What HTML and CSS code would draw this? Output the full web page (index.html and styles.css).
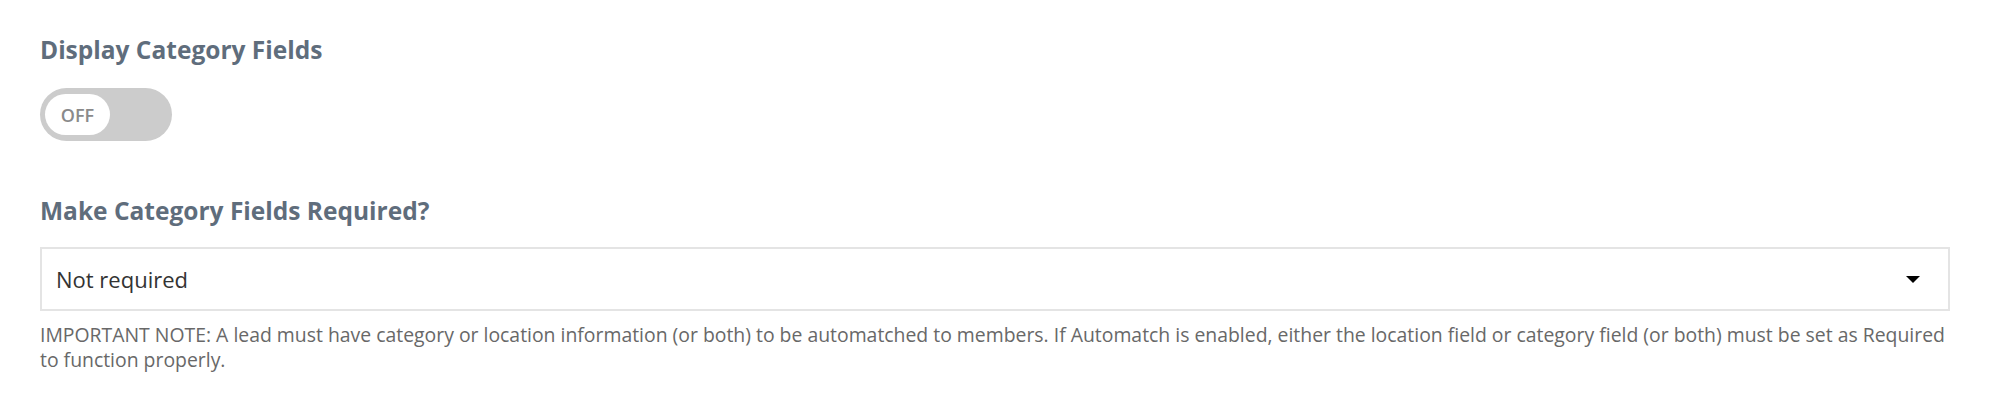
FILE: index.html
```html
<!DOCTYPE html>
<html>
<head>
<meta charset="utf-8">
<link rel="stylesheet" href="styles.css">
</head>
<body>
<div class="page">
  <section class="field">
    <h3 class="field-label">Display Category Fields</h3>
    <div class="toggle">
      <span class="toggle-knob">OFF</span>
    </div>
  </section>
  <section class="field field-second">
    <h3 class="field-label">Make Category Fields Required?</h3>
    <div class="select">
      <span class="select-value">Not required</span>
      <span class="select-arrow"></span>
    </div>
    <p class="note">IMPORTANT NOTE: A lead must have category or location information (or both) to be automatched to members. If Automatch is enabled, either the location field or category field (or both) must be set as Required to function properly.</p>
  </section>
</div>
</body>
</html>
```
FILE: styles.css
```css
html, body {
  margin: 0;
  padding: 0;
  background: #ffffff;
}
.page {
  padding: 35px 48px 0 40px;
  font-family: "Open Sans", "Noto Sans", sans-serif;
}
.field-label {
  margin: 0;
  font-size: 24.5px;
  line-height: 30px;
  font-weight: 700;
  color: #5f6d7c;
}
.toggle {
  margin-top: 23px;
  width: 132px;
  height: 53px;
  border-radius: 27px;
  background: #cccccc;
  display: flex;
  align-items: center;
  padding-left: 5px;
  box-sizing: border-box;
}
.toggle-knob {
  width: 65px;
  height: 41px;
  border-radius: 21px;
  background: #ffffff;
  display: flex;
  align-items: center;
  justify-content: center;
  font-size: 18px;
  font-weight: 600;
  color: #8a8a8a;
}
.field-second {
  margin-top: 55px;
}
.select {
  margin-top: 21px;
  height: 64px;
  border: 2px solid #e4e4e4;
  box-sizing: border-box;
  display: flex;
  align-items: center;
  justify-content: space-between;
  padding: 0 28px 0 14px;
}
.select-value {
  font-size: 22px;
  color: #333333;
}
.select-arrow {
  width: 0;
  height: 0;
  border-left: 7px solid transparent;
  border-right: 7px solid transparent;
  border-top: 7px solid #000000;
}
.note {
  margin: 11px 0 0;
  font-size: 19.4px;
  line-height: 25px;
  color: #686868;
}
```
